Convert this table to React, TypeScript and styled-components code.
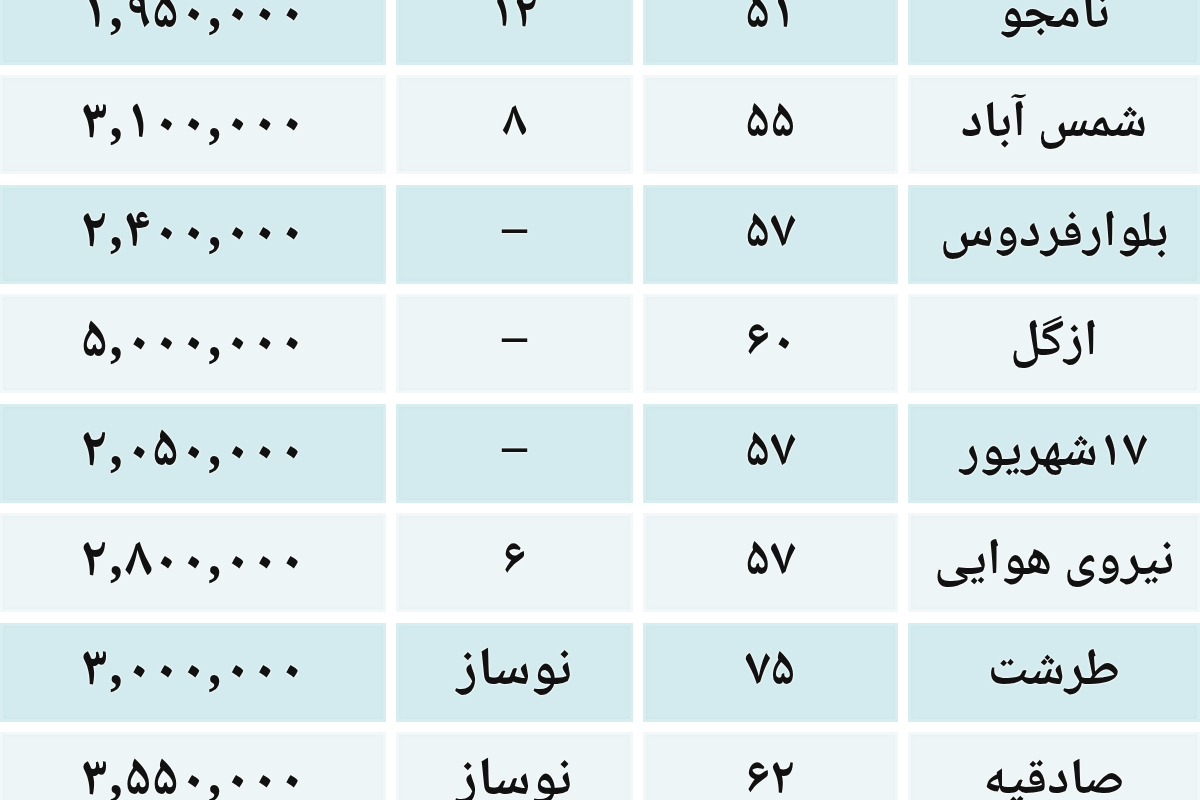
import React from 'react';
import styled, { createGlobalStyle } from 'styled-components';

const GlobalStyle = createGlobalStyle`
  html, body {
    margin: 0;
    padding: 0;
    background: #ffffff;
    overflow: hidden;
  }
`;

const Page = styled.div`
  width: 1200px;
  height: 800px;
  overflow: hidden;
  background: #ffffff;
`;

const Table = styled.div`
  direction: rtl;
  display: flex;
  flex-direction: column;
  gap: 10.5px;
  margin-top: -34.5px;
  font-family: "Noto Naskh Arabic", "Noto Sans Arabic", "DejaVu Sans", sans-serif;
`;

const Row = styled.div`
  display: grid;
  grid-template-columns: 292px 255px 237px 386px;
  column-gap: 10px;
  height: 99px;
`;

const Cell = styled.div<{ $dark: boolean; $size: number }>`
  display: flex;
  align-items: center;
  justify-content: center;
  background: ${(p) => (p.$dark ? '#d3ebee' : '#eef5f6')};
  box-shadow: inset 0 0 0 3px ${(p) => (p.$dark ? '#d7edf0' : '#f2f8f9')},
    inset 0 0 6px rgba(160, 190, 195, 0.25);
  color: #111;
  font-size: ${(p) => p.$size}px;
  font-weight: bold;
  text-shadow: 0 0 3px #fff, 0 0 2px #fff;
  white-space: nowrap;
`;

type Item = { name: string; area: string; age: string; price: string };

const rows: Item[] = [
  { name: 'نامجو', area: '۵۱', age: '۱۲', price: '۱,۹۵۰,۰۰۰' },
  { name: 'شمس آباد', area: '۵۵', age: '۸', price: '۳,۱۰۰,۰۰۰' },
  { name: 'بلوارفردوس', area: '۵۷', age: '–', price: '۲,۴۰۰,۰۰۰' },
  { name: 'ازگل', area: '۶۰', age: '–', price: '۵,۰۰۰,۰۰۰' },
  { name: '۱۷شهریور', area: '۵۷', age: '–', price: '۲,۰۵۰,۰۰۰' },
  { name: 'نیروی هوایی', area: '۵۷', age: '۶', price: '۲,۸۰۰,۰۰۰' },
  { name: 'طرشت', area: '۷۵', age: 'نوساز', price: '۳,۰۰۰,۰۰۰' },
  { name: 'صادقیه', area: '۶۲', age: 'نوساز', price: '۳,۵۵۰,۰۰۰' },
];

const App: React.FC = () => (
  <Page>
    <GlobalStyle />
    <Table>
      {rows.map((r, i) => {
        const dark = i % 2 === 0;
        const isWord = r.age === 'نوساز';
        return (
          <Row key={r.name}>
            <Cell $dark={dark} $size={51}>{r.name}</Cell>
            <Cell $dark={dark} $size={52}>{r.area}</Cell>
            <Cell $dark={dark} $size={isWord ? 54 : 50}>{r.age}</Cell>
            <Cell $dark={dark} $size={56}>{r.price}</Cell>
          </Row>
        );
      })}
    </Table>
  </Page>
);

export default App;
